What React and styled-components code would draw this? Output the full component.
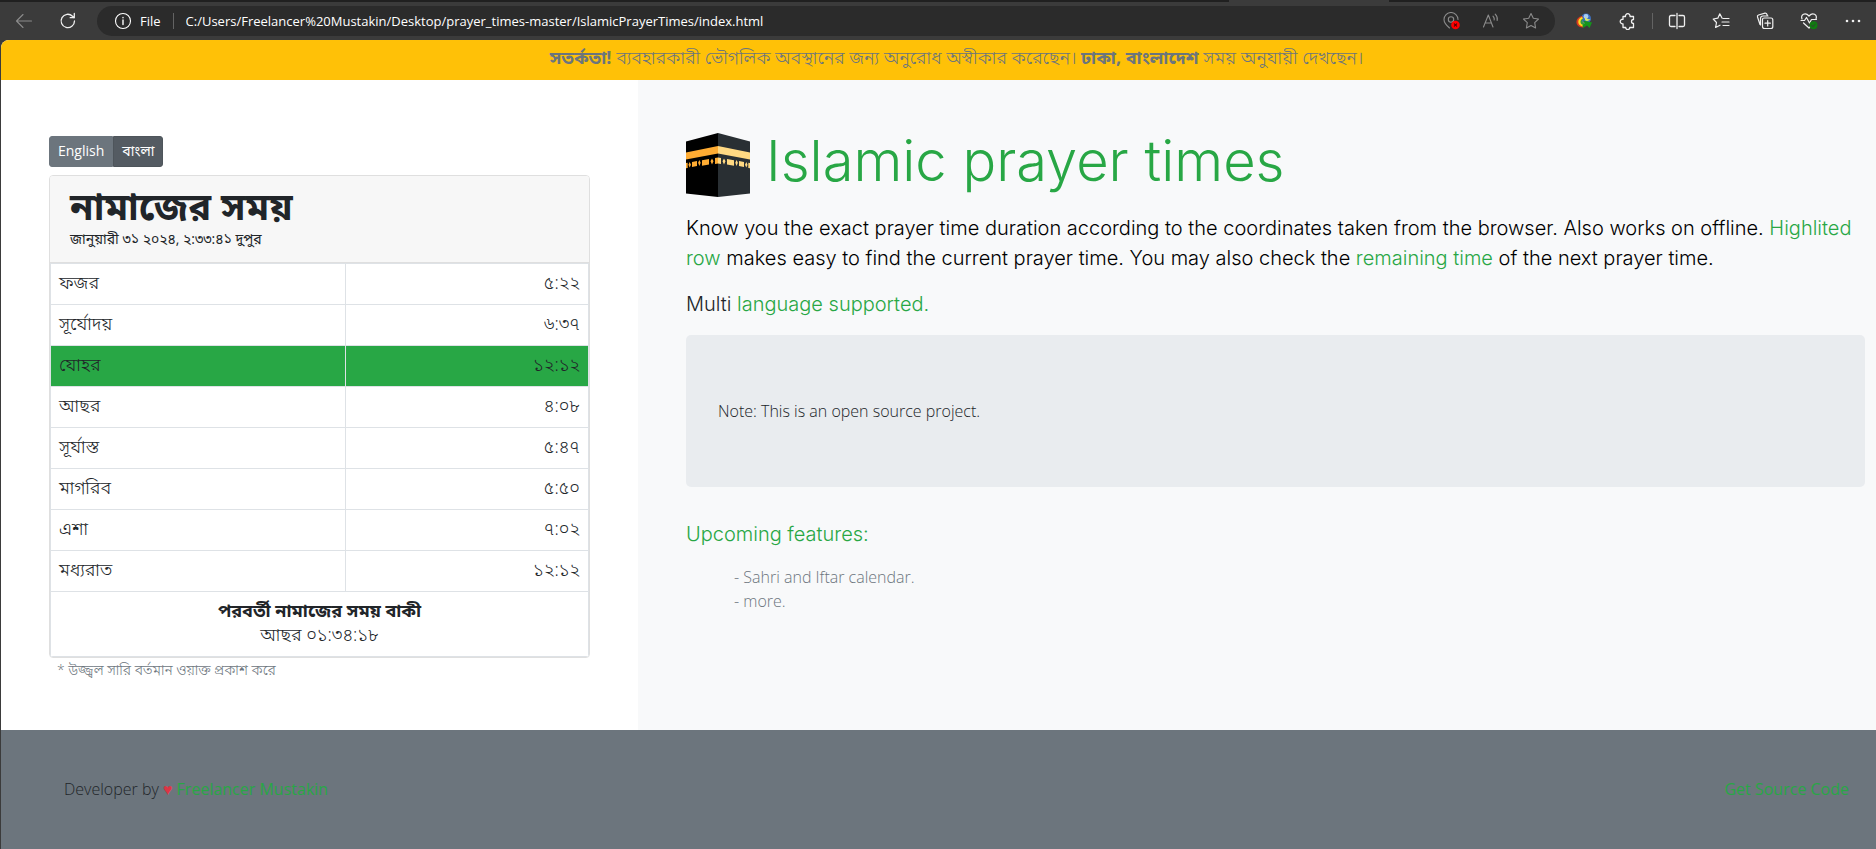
import React from "react";
import styled, { createGlobalStyle } from "styled-components";

const GlobalStyle = createGlobalStyle`
  *, *::before, *::after { box-sizing: border-box; }
  body {
    margin: 0;
    background: #3b3b3b;
    color: #212529;
    font-family: "Open Sans", "Noto Sans Bengali", "Noto Sans", sans-serif;
    font-size: 16px;
    font-weight: 300;
    line-height: 24px;
  }
  h1, h2, p, ul { margin: 0; padding: 0; }
  b { font-weight: 700; }
  button, input { font: inherit; color: inherit; margin: 0; padding: 0; border: 0; background: none; }
`;

const Window = styled.div`
  min-height: 100vh;
  display: flex;
  flex-direction: column;
`;

const TabStrip = styled.div`
  display: grid;
  grid-template-columns: 1229fr 160px 487fr;
  height: 2px;
  background: #202020;
`;

const ActiveTab = styled.div`
  grid-column: 2;
  background: #3b3b3b;
`;

const Toolbar = styled.header`
  display: flex;
  align-items: center;
  height: 38px;
  padding: 0 11px 0 12px;
  background: #3b3b3b;
  color: #fff;
  font-size: 13px;
  font-weight: 400;
`;

const NavButtons = styled.div`
  display: flex;
  gap: 20px;
  margin-right: 17px;
`;

const IconButton = styled.button`
  display: flex;
  align-items: center;
  justify-content: center;
  width: 24px;
  height: 24px;
  color: ${(p) => (p.$dim ? "#8b8b8b" : "#f0f0f0")};
`;

const AddressBar = styled.div`
  flex: 1;
  display: flex;
  align-items: center;
  height: 30px;
  padding: 0 12px 0 17px;
  border-radius: 15px;
  background: #2b2b2b;
`;

const SiteInfo = styled.button`
  display: flex;
  align-items: center;
  gap: 8px;
`;

const Divider = styled.span`
  width: 1px;
  height: 16px;
  margin: 0 12px;
  background: #636363;
`;

const Address = styled.input`
  flex: 1;
  min-width: 0;
  outline: 0;
`;

const AddressActions = styled.div`
  display: flex;
  gap: 16px;
`;

const Extensions = styled.div`
  display: flex;
  align-items: center;
  gap: 20px;
  margin-left: 17px;
`;

const ToolDivider = styled(Divider)`
  margin: 0 -8px;
`;

const Page = styled.div`
  flex: 1;
  display: flex;
  flex-direction: column;
  margin-left: 1px;
  overflow: hidden;
  border-top-left-radius: 8px;
  background: #fff;
`;

const Warning = styled.p`
  padding: 5px 20px 11px 56px;
  background: #ffc107;
  color: #6c757d;
  font-size: 18px;
  text-align: center;
`;

const Columns = styled.main`
  display: grid;
  grid-template-columns: 637fr 1238fr;
`;

const TimesPanel = styled.section`
  padding: 56px 48px 48px;
`;

const LanguageSwitch = styled.div`
  display: flex;
  margin-bottom: 8px;
`;

const LanguageButton = styled.button`
  height: 31px;
  padding: 0 8px 2px;
  border: 1px solid ${(p) => (p.$active ? "#4e555b" : "#6c757d")};
  border-radius: ${(p) => (p.$active ? "0 3px 3px 0" : "3px 0 0 3px")};
  background: ${(p) => (p.$active ? "#545b62" : "#6c757d")};
  color: #fff;
  font-size: 14px;
  font-weight: 400;
`;

const Card = styled.div`
  border: 1px solid #dfdfdf;
  border-radius: 4px;
  overflow: hidden;
`;

const CardHeader = styled.div`
  padding: 12px 20px 0;
  height: 87px;
  border-bottom: 1px solid #dfdfdf;
  background: #f7f7f7;
`;

const CardTitle = styled.h2`
  font-size: 38px;
  font-weight: 700;
  line-height: 34px;
`;

const CardDate = styled.p`
  font-size: 14px;
  font-weight: 400;
  line-height: 34px;
`;

const Table = styled.table`
  width: 100%;
  border-collapse: collapse;
  font-size: 18px;
`;

const Row = styled.tr`
  height: 41px;
  background: ${(p) => (p.$current ? "#28a745" : "#fff")};
`;

const cell = `
  border: 1px solid #dee2e6;
  padding: 6px 8px 10px;
  vertical-align: top;
`;

const Name = styled.th`
  ${cell}
  width: 295px;
  font-weight: 300;
  text-align: left;
`;

const Time = styled.td`
  ${cell}
  text-align: right;
`;

const Remaining = styled.td`
  ${cell}
  text-align: center;
`;

const Footnote = styled.p`
  padding-left: 8px;
  color: #6c757d;
  font-size: 14px;
`;

const About = styled.section`
  padding: 53px 11px 48px 48px;
  background: #f8f9fa;
`;

const Heading = styled.div`
  display: flex;
  align-items: flex-start;
  gap: 16px;
  margin-bottom: 16px;
`;

const Title = styled.h1`
  color: #28a745;
  font-family: Inter, sans-serif;
  font-size: 56px;
  font-weight: 300;
  line-height: 56px;
`;

const Lead = styled.p`
  margin-bottom: 16px;
  color: ${(p) => (p.$green ? "#28a745" : p.$soft ? "#212529" : "#000")};
  font-family: Inter, sans-serif;
  font-size: 20px;
  line-height: 30px;
`;

const Green = styled.span`
  color: #28a745;
`;

const Note = styled.div`
  margin-bottom: 32px;
  padding: 64px 32px;
  border-radius: 5px;
  background: #e9ecef;
`;

const Features = styled.ul`
  padding-left: 48px;
  color: #6c757d;
  list-style: none;
`;

const Footer = styled.footer`
  flex: 1;
  display: flex;
  justify-content: space-between;
  padding: 47px 27px 48px 63px;
  background: #6c757d;
`;

const Heart = styled.span`
  color: #dc3545;
  font-family: "DejaVu Sans", sans-serif;
`;

const Link = styled.a`
  color: #28a745;
  font-weight: 400;
  text-decoration: none;
`;

const Icon = ({ children, size = 18 }) => (
  <svg width={size} height={size} viewBox="0 0 18 18" fill="none" stroke="currentColor" strokeWidth="1.1" strokeLinecap="round" strokeLinejoin="round" aria-hidden="true">
    {children}
  </svg>
);

const BackIcon = () => <Icon><path d="M16.500 9H1.500M8 2.500L1.500 9L8 15.500" /></Icon>;
const ReloadIcon = () => <Icon><path d="M15.500 9A6.700 6.700 0 1 1 13.500 4.200L15 5.700M15.300 1.500V5.700H11.200" strokeWidth="1.300" /></Icon>;
const InfoIcon = () => <Icon><circle cx="9" cy="9" r="7.500" /><path d="M9 8V12.500M9 5.500V5.700" strokeWidth="1.400" /></Icon>;
const LocationIcon = () => (
  <Icon>
    <path d="M7.500 16C4.500 13.500 2 10.500 2 7.500A7 7 0 0 1 16 7.500" /><circle cx="9" cy="7.500" r="2.700" />
    <circle cx="13.500" cy="13" r="4.300" fill="#f00" stroke="none" /><path d="M12.300 11.800L14.700 14.200M14.700 11.800L12.300 14.200" stroke="#500" />
  </Icon>
);
const ReadAloudIcon = () => <Icon><path d="M1.500 15L6.300 3L11 15M3.200 11H9.400M11 4.200Q12.600 6 12.200 8M13.200 2.200Q16 5 15.200 8.500" /></Icon>;
const star = "M9 1.500L11.300 6.300L16.500 7L12.700 10.700L13.600 16L9 13.500L4.400 16L5.300 10.700L1.500 7L6.700 6.300Z";
const StarIcon = () => <Icon><path d={star} /></Icon>;
const DownloadIcon = () => (
  <Icon>
    <g stroke="none">
      <circle cx="11" cy="6.500" r="5" fill="#3c6fc0" /><circle cx="11" cy="4.500" r="2.400" fill="#a9cdf2" />
      <path d="M6.500 4C-.5 6 -.5 15 8 15.500L10 12C6 12 5 8 8 5Z" fill="#d93b20" />
      <path d="M6.500 5C1.500 7.500 2.500 14.500 8.500 14.500L10 11C7 11 6 8 8 6Z" fill="#ffdc21" />
      <path d="M7 7C4.500 9 5 12.500 9 13L10 11C7.500 11 6.500 9 8 7Z" fill="#2f9a48" />
      <path d="M10 5Q12 7.500 15.500 7.500Q12 10 10 8Z" fill="#dce866" />
      <path d="M8 8.500L17 10.500L14.500 16L12 13.500L8 16L7.500 13L10 11.500Z" fill="#14961c" />
    </g>
  </Icon>
);
const PuzzleIcon = () => <Icon><path d="M4 4.500H6.500A2.300 2.300 0 1 1 11 4.500H14.500V7.500A1.900 1.900 0 0 0 14.500 11.500V15.500H10.800A2 2 0 0 1 6.700 15.500H4V11.800A2.300 2.300 0 1 1 4 7.300Z" strokeWidth="1.300" /></Icon>;
const SplitIcon = () => <Icon><path d="M7 3.500H3Q1.500 3.500 1.500 5V13Q1.500 14.500 3 14.500H7M11 3.500H15Q16.500 3.500 16.500 5V13Q16.500 14.500 15 14.500H11M9 1.500V16.500" strokeWidth="1.300" /></Icon>;
const FavoritesIcon = () => <Icon><path d="M10 6L7.800 1.800L5.800 6.200L1.200 7L4.500 10.500L3.600 15.500L8 13.200M11 6.500H17M10 10H17M11 13.500H17" strokeWidth="1.200" /></Icon>;
const CollectionsIcon = () => <Icon><path d="M4 12.500L1.500 5Q1 3.500 2.500 3L9 1.200Q10.500 1 11 2.500L11.300 3.500M4.500 13V6.500Q4.500 4 7 4H12M8 6H15Q16.800 6 16.800 8V14.500Q16.800 16.500 15 16.500H8.500Q6.500 16.500 6.500 14.500V7.500Q6.500 6 8 6ZM11.700 8.500V14M9 11.200H14.400" strokeWidth="1.200" /></Icon>;
const HealthIcon = () => (
  <Icon>
    <path d="M2 7C.5 3 5 -.5 9 4C13 -.5 17.500 3 16 7M3.500 11L9 16L11 14M1 8.500H4.500L6.500 5.500L9.500 11L11.500 7.500H16.500" strokeWidth="1.200" />
    <circle cx="13.500" cy="13.300" r="4" fill="#107c10" stroke="none" /><path d="M11.700 13.400L13 14.700L15.300 12" stroke="#2b4f2b" />
  </Icon>
);
const MoreIcon = () => <Icon><g fill="currentColor" stroke="none"><circle cx="3" cy="9" r="1.300" /><circle cx="9" cy="9" r="1.300" /><circle cx="15" cy="9" r="1.300" /></g></Icon>;

const KaabaIcon = () => (
  <svg width="64" height="64" viewBox="0 0 64 64" role="img" aria-label="Kaaba">
    <path d="M0 8.500L32 0V64L0 60.500Z" fill="#000" />
    <path d="M32 0L64 8.500V60.500L32 64Z" fill="#292f33" />
    <path d="M0 19.500L32 13V20.500L0 26.500Z" fill="#ffac33" />
    <path d="M32 13L64 19.500V26.500L32 20.500Z" fill="#ffd983" />
    <path d="M0 30L1.700 29.700V35L0 35.300ZM6 29L11 28V33L6 34ZM16 27.300L23 26V31.500L16 32.700ZM29 25L32 24.500V30.500L29 31ZM3.700 29L5 31.700L3.700 34.400L2.400 31.700ZM13.400 27L14.700 29.800L13.400 33L12.100 29.800ZM26 25.500L27.500 28.300L26 31.500L24.500 28.300Z" fill="#ffac33" />
    <path d="M32 24.500L35 25V31L32 30.500ZM41 26L48 27.300V32.700L41 31.500ZM53 28L58 29V34L53 33ZM62.300 29.700L64 30V35.300L62.300 35ZM38 25.500L39.500 28.300L38 31.500L36.500 28.300ZM50.600 27L51.900 29.800L50.600 33L49.300 29.800ZM60.300 29L61.600 31.700L60.300 34.400L59 31.700Z" fill="#ffd983" />
  </svg>
);

const times = [
  ["ফজর", "৫:২২"],
  ["সূর্যোদয়", "৬:৩৭"],
  ["যোহর", "১২:১২", true],
  ["আছর", "৪:০৮"],
  ["সূর্যাস্ত", "৫:৪৭"],
  ["মাগরিব", "৫:৫০"],
  ["এশা", "৭:০২"],
  ["মধ্যরাত", "১২:১২"],
];

export default function App() {
  return (
    <Window>
      <GlobalStyle />
      <TabStrip><ActiveTab /></TabStrip>
      <Toolbar>
        <NavButtons>
          <IconButton $dim aria-label="Back"><BackIcon /></IconButton>
          <IconButton aria-label="Refresh"><ReloadIcon /></IconButton>
        </NavButtons>
        <AddressBar>
          <SiteInfo><InfoIcon />File</SiteInfo>
          <Divider />
          <Address aria-label="Address" defaultValue="C:/Users/Freelancer%20Mustakin/Desktop/prayer_times-master/IslamicPrayerTimes/index.html" />
          <AddressActions>
            <IconButton $dim aria-label="Location blocked"><LocationIcon /></IconButton>
            <IconButton $dim aria-label="Read aloud"><ReadAloudIcon /></IconButton>
            <IconButton $dim aria-label="Add to favorites"><StarIcon /></IconButton>
          </AddressActions>
        </AddressBar>
        <Extensions>
          <IconButton aria-label="Download manager"><DownloadIcon /></IconButton>
          <IconButton aria-label="Extensions"><PuzzleIcon /></IconButton>
          <ToolDivider />
          <IconButton aria-label="Split screen"><SplitIcon /></IconButton>
          <IconButton aria-label="Favorites"><FavoritesIcon /></IconButton>
          <IconButton aria-label="Collections"><CollectionsIcon /></IconButton>
          <IconButton aria-label="Browser essentials"><HealthIcon /></IconButton>
          <IconButton aria-label="More"><MoreIcon /></IconButton>
        </Extensions>
      </Toolbar>
      <Page>
        <Warning role="alert">
          <b>সতর্কতা!</b> ব্যবহারকারী ভৌগলিক অবস্থানের জন্য অনুরোধ অস্বীকার করেছেন। <b>ঢাকা, বাংলাদেশ</b> সময় অনুযায়ী দেখছেন।
        </Warning>
        <Columns>
          <TimesPanel>
            <LanguageSwitch>
              <LanguageButton>English</LanguageButton>
              <LanguageButton $active>বাংলা</LanguageButton>
            </LanguageSwitch>
            <Card>
              <CardHeader>
                <CardTitle>নামাজের সময়</CardTitle>
                <CardDate>জানুয়ারী ৩১ ২০২৪, ২:৩৩:৪১ দুপুর</CardDate>
              </CardHeader>
              <Table>
                <tbody>
                  {times.map(([name, time, current]) => (
                    <Row key={name} $current={current}>
                      <Name scope="row">{name}</Name>
                      <Time>{time}</Time>
                    </Row>
                  ))}
                  <Row>
                    <Remaining colSpan={2}>
                      <b>পরবর্তী নামাজের সময় বাকী</b>
                      <br />
                      আছর ০১:৩৪:১৮
                    </Remaining>
                  </Row>
                </tbody>
              </Table>
            </Card>
            <Footnote>* উজ্জ্বল সারি বর্তমান ওয়াক্ত প্রকাশ করে</Footnote>
          </TimesPanel>
          <About>
            <Heading>
              <KaabaIcon />
              <Title>Islamic prayer times</Title>
            </Heading>
            <Lead>
              Know you the exact prayer time duration according to the coordinates taken from the browser. Also works on offline. <Green>Highlited row</Green> makes easy to find the current prayer time. You may also check the <Green>remaining time</Green> of the next prayer time.
            </Lead>
            <Lead $soft>Multi <Green>language supported.</Green></Lead>
            <Note>Note: This is an open source project.</Note>
            <Lead $green>Upcoming features:</Lead>
            <Features>
              <li>- Sahri and Iftar calendar.</li>
              <li>- more.</li>
            </Features>
          </About>
        </Columns>
        <Footer>
          <p>Developer by <Heart>♥</Heart> <Link href="#developer">Freelancer Mustakin</Link></p>
          <Link href="#source">Get Source Code</Link>
        </Footer>
      </Page>
    </Window>
  );
}
